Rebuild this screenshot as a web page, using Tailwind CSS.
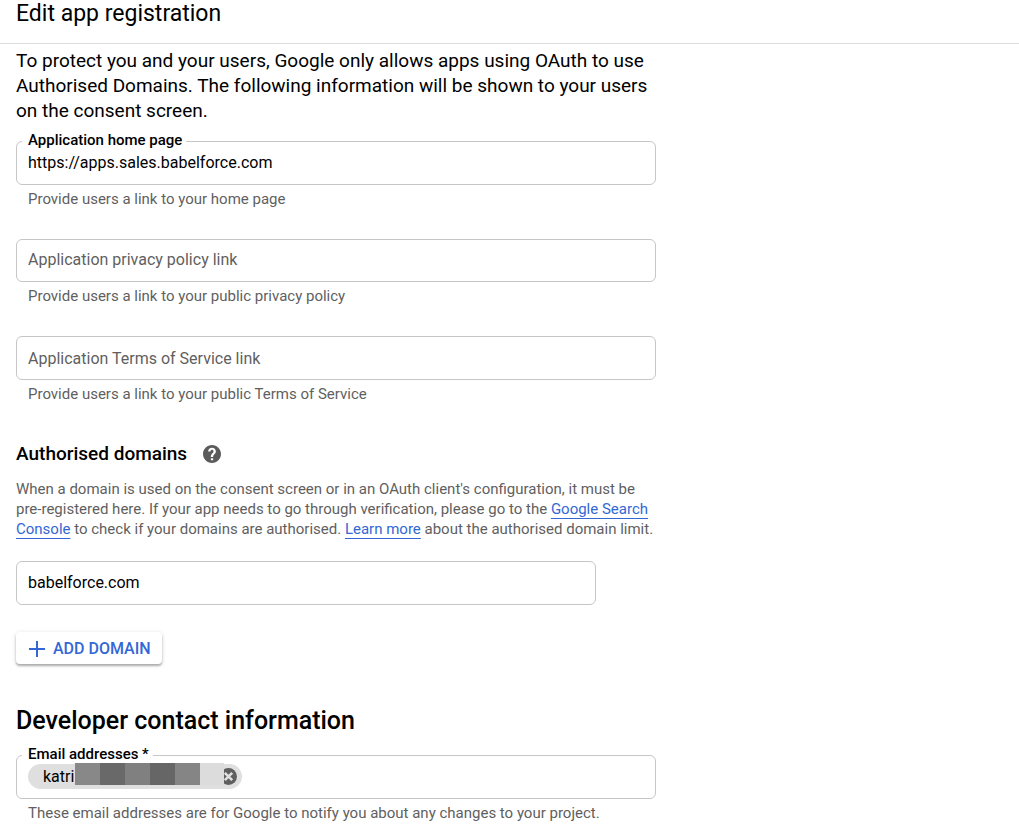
<!DOCTYPE html>
<html lang="en-GB">
<head>
<meta charset="utf-8">
<meta name="viewport" content="width=device-width, initial-scale=1">
<title>Edit app registration</title>
<script src="https://cdn.jsdelivr.net/npm/@tailwindcss/browser@4"></script>
</head>
<body class="bg-white font-[Roboto,sans-serif] text-black">
<header class="h-11 border-b border-[#dadce0] px-4">
  <h1 class="text-[23px] leading-7">Edit app registration</h1>
</header>
<main class="px-4 pt-1">
  <form class="max-w-[640px]">
    <p class="text-[19px] leading-[25px]">To protect you and your users, Google only allows apps using OAuth to use Authorised Domains. The following information will be shown to your users on the consent screen.</p>

    <div class="mt-[18px] flex flex-col gap-[30px]">
      <div>
        <div class="relative h-11 rounded-md border border-[#c6c6c6]">
          <label for="home" class="absolute -top-3 left-[5px] bg-white pr-1 pl-1.5 text-[15px] leading-5 font-medium">Application home page</label>
          <input id="home" type="url" value="https://apps.sales.babelforce.com" aria-describedby="home-hint" class="h-full w-full rounded-md px-[11px] pb-0.5 text-[16px] outline-none">
        </div>
        <p id="home-hint" class="mt-1 px-3 text-[15px] leading-5 text-[#5f5f5f]">Provide users a link to your home page</p>
      </div>
      <div>
        <input type="url" aria-label="Application privacy policy link" placeholder="Application privacy policy link" aria-describedby="privacy-hint" class="block h-[43px] w-full rounded-md border border-[#c6c6c6] px-[11px] pb-0.5 text-[16px] outline-none placeholder:text-[#5f5f5f]">
        <p id="privacy-hint" class="mt-1 px-3 text-[15px] leading-5 text-[#5f5f5f]">Provide users a link to your public privacy policy</p>
      </div>
      <div>
        <input type="url" aria-label="Application Terms of Service link" placeholder="Application Terms of Service link" aria-describedby="terms-hint" class="block h-11 w-full rounded-md border border-[#c6c6c6] px-[11px] text-[16px] outline-none placeholder:text-[#5f5f5f]">
        <p id="terms-hint" class="mt-1 px-3 text-[15px] leading-5 text-[#5f5f5f]">Provide users a link to your public Terms of Service</p>
      </div>
    </div>

    <div class="mt-[38px] flex items-center gap-4">
      <h2 id="domains" class="text-[19px] leading-6 font-medium">Authorised domains</h2>
      <button type="button" aria-label="Help" class="text-[#5b5b5b]">
        <svg class="block size-[18px]" viewBox="2 2 20 20" fill="currentColor"><path d="M12 2C6.480 2 2 6.480 2 12s4.480 10 10 10 10-4.480 10-10S17.520 2 12 2zm1.300 17h-2.600v-2.400h2.600v2.400zm2.070-7.450l-.9.920C13.750 13.200 13.300 13.700 13.300 15.200h-2.600v-.6c0-1.100.45-2.100 1.170-2.830l1.240-1.260c.37-.36.590-.86.590-1.410 0-1-.8-1.700-1.700-1.700s-1.700.8-1.700 1.900H7.700C7.700 6.900 9.600 5 12 5s4.300 1.800 4.300 4.100c0 .88-.36 1.780-.93 2.450z"/></svg>
      </button>
    </div>
    <p class="mt-[13px] text-[15px] leading-5 text-[#5f5f5f]">When a domain is used on the consent screen or in an OAuth client's configuration, it must be pre-registered here. If your app needs to go through verification, please go to the <a href="#" class="text-[#3367d6] underline decoration-1 underline-offset-4 [text-decoration-skip-ink:none]">Google Search Console</a> to check if your domains are authorised. <a href="#" class="text-[#3367d6] underline decoration-1 underline-offset-4 [text-decoration-skip-ink:none]">Learn more</a> about the authorised domain limit.</p>
    <input type="text" value="babelforce.com" aria-labelledby="domains" class="mt-[22px] block h-11 w-full max-w-[580px] rounded-md border border-[#c6c6c6] px-[11px] pb-0.5 text-[16px] outline-none">
    <button type="button" class="mt-[27px] flex h-8 items-center gap-2 rounded-[4px] pt-px pr-[11px] pl-[13px] text-[16px] font-medium text-[#3367d6] shadow-[0_2px_2px_rgba(0,0,0,0.26),0_1px_5px_rgba(0,0,0,0.14)]">
      <svg class="size-4" viewBox="0 0 16 16" fill="none" stroke="currentColor" stroke-width="2"><path d="M8 0v16M0 8h16"/></svg>
      ADD DOMAIN
    </button>

    <h2 class="mt-[42px] text-[25px] leading-[30px] font-medium">Developer contact information</h2>
    <div class="mt-[19px]">
      <div class="relative flex h-11 items-center rounded-md border border-[#c6c6c6] px-[11px] pb-px">
        <label for="emails" class="absolute -top-3 left-[5px] bg-white pr-1 pl-1.5 text-[15px] leading-5 font-medium">Email addresses *</label>
        <div class="relative flex h-[25px] w-[214px] shrink-0 items-center justify-between rounded-full bg-[#dfdfdf] pr-[5px] pl-[15px] text-[16px]">
          <span>katri</span>
          <button type="button" aria-label="Remove email address" class="text-[#5f5f5f]">
            <svg class="block size-[17px]" viewBox="0 0 17 17"><circle cx="8.500" cy="8.500" r="8.500" fill="currentColor"/><path d="M4.800 4.800l7.400 7.400M12.200 4.800l-7.400 7.400" stroke="#dfdfdf" stroke-width="2.600"/></svg>
          </button>
          <div class="absolute -top-px left-[47px] flex h-[22px]">
            <span class="w-[25px] bg-[#888888]"></span>
            <span class="w-[25px] bg-[#696969]"></span>
            <span class="w-[25px] bg-[#808080]"></span>
            <span class="w-[25px] bg-[#666666]"></span>
            <span class="w-[25px] bg-[#858585]"></span>
            <span class="w-6 bg-[#dcdcdc]"></span>
          </div>
        </div>
        <input id="emails" type="email" aria-describedby="emails-hint" class="ml-2 h-full min-w-0 flex-1 text-[16px] outline-none">
      </div>
      <p id="emails-hint" class="mt-1 px-3 text-[15px] leading-5 text-[#5f5f5f]">These email addresses are for Google to notify you about any changes to your project.</p>
    </div>
  </form>
</main>
</body>
</html>
